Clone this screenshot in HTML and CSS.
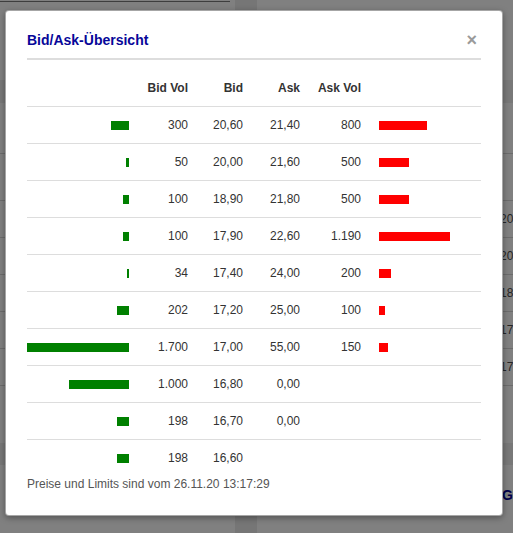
FILE: index.html
```html
<!DOCTYPE html>
<html lang="de">
<head>
<meta charset="utf-8">
<title>Bid/Ask-Übersicht</title>
<link rel="stylesheet" href="styles.css">
</head>
<body>
<div class="page">
  <div class="bg-top">
    <div class="ruler"><span class="tick"></span><span class="tick"></span><span class="tick"></span></div>
  </div>
  <div class="bg-gap1"></div>
  <div class="bg-dark1"></div>
  <div class="bg-gap2"></div>
  <div class="bg-row bg-row-first"></div>
  <div class="bg-row"><span class="bg-cell">20</span></div>
  <div class="bg-row"><span class="bg-cell">20</span></div>
  <div class="bg-row"><span class="bg-cell">18</span></div>
  <div class="bg-row"><span class="bg-cell">17</span></div>
  <div class="bg-row"><span class="bg-cell">17</span></div>
  <div class="bg-row bg-row-tall"></div>
  <div class="bg-dark2"></div>
  <div class="bg-foot"><span class="bg-link">G</span></div>
</div>

<div class="modal">
  <div class="m-head">
    <h4 class="m-title">Bid/Ask-Übersicht</h4>
    <span class="m-close">×</span>
  </div>
  <div class="m-rule"></div>
  <div class="book">
    <div class="b-row b-head">
      <div class="c-bar-l"></div>
      <div class="c-num">Bid Vol</div>
      <div class="c-num">Bid</div>
      <div class="c-num">Ask</div>
      <div class="c-num">Ask Vol</div>
      <div class="c-bar-r"></div>
    </div>
    <div class="b-row">
      <div class="c-bar-l"><span class="bar bar-bid" style="width:18px"></span></div>
      <div class="c-num">300</div><div class="c-num">20,60</div><div class="c-num">21,40</div><div class="c-num">800</div>
      <div class="c-bar-r"><span class="bar bar-ask" style="width:48px"></span></div>
    </div>
    <div class="b-row">
      <div class="c-bar-l"><span class="bar bar-bid" style="width:3px"></span></div>
      <div class="c-num">50</div><div class="c-num">20,00</div><div class="c-num">21,60</div><div class="c-num">500</div>
      <div class="c-bar-r"><span class="bar bar-ask" style="width:30px"></span></div>
    </div>
    <div class="b-row">
      <div class="c-bar-l"><span class="bar bar-bid" style="width:6px"></span></div>
      <div class="c-num">100</div><div class="c-num">18,90</div><div class="c-num">21,80</div><div class="c-num">500</div>
      <div class="c-bar-r"><span class="bar bar-ask" style="width:30px"></span></div>
    </div>
    <div class="b-row">
      <div class="c-bar-l"><span class="bar bar-bid" style="width:6px"></span></div>
      <div class="c-num">100</div><div class="c-num">17,90</div><div class="c-num">22,60</div><div class="c-num">1.190</div>
      <div class="c-bar-r"><span class="bar bar-ask" style="width:71px"></span></div>
    </div>
    <div class="b-row">
      <div class="c-bar-l"><span class="bar bar-bid" style="width:2px"></span></div>
      <div class="c-num">34</div><div class="c-num">17,40</div><div class="c-num">24,00</div><div class="c-num">200</div>
      <div class="c-bar-r"><span class="bar bar-ask" style="width:12px"></span></div>
    </div>
    <div class="b-row">
      <div class="c-bar-l"><span class="bar bar-bid" style="width:12px"></span></div>
      <div class="c-num">202</div><div class="c-num">17,20</div><div class="c-num">25,00</div><div class="c-num">100</div>
      <div class="c-bar-r"><span class="bar bar-ask" style="width:6px"></span></div>
    </div>
    <div class="b-row">
      <div class="c-bar-l"><span class="bar bar-bid" style="width:102px"></span></div>
      <div class="c-num">1.700</div><div class="c-num">17,00</div><div class="c-num">55,00</div><div class="c-num">150</div>
      <div class="c-bar-r"><span class="bar bar-ask" style="width:9px"></span></div>
    </div>
    <div class="b-row">
      <div class="c-bar-l"><span class="bar bar-bid" style="width:60px"></span></div>
      <div class="c-num">1.000</div><div class="c-num">16,80</div><div class="c-num">0,00</div><div class="c-num"></div>
      <div class="c-bar-r"></div>
    </div>
    <div class="b-row">
      <div class="c-bar-l"><span class="bar bar-bid" style="width:12px"></span></div>
      <div class="c-num">198</div><div class="c-num">16,70</div><div class="c-num">0,00</div><div class="c-num"></div>
      <div class="c-bar-r"></div>
    </div>
    <div class="b-row">
      <div class="c-bar-l"><span class="bar bar-bid" style="width:12px"></span></div>
      <div class="c-num">198</div><div class="c-num">16,60</div><div class="c-num"></div><div class="c-num"></div>
      <div class="c-bar-r"></div>
    </div>
  </div>
  <p class="m-foot">Preise und Limits sind vom 26.11.20 13:17:29</p>
</div>
</body>
</html>
```

FILE: styles.css
```css
html, body {
  margin: 0;
  padding: 0;
}
body {
  width: 513px;
  height: 533px;
  overflow: hidden;
  position: relative;
  font-family: "Liberation Sans", Arial, sans-serif;
  background: #808080 linear-gradient(to right, transparent 235px, #767676 235px, #767676 257px, transparent 257px);
}
.page {
  display: flex;
  flex-direction: column;
}
.bg-top {
  height: 10px;
  box-sizing: border-box;
  padding-top: 1px;
}
.ruler {
  width: 213px;
  height: 3px;
  border-top: 1px solid #3e3e3e;
  display: flex;
  padding-left: 17px;
}
.tick {
  width: 1px;
  height: 3px;
  background: #3e3e3e;
  margin-right: 77px;
}
.tick:nth-child(2) { margin-right: 75px; }
.bg-gap1 { height: 70px; }
.bg-dark1 { height: 23px; background: #787878; }
.bg-gap2 { height: 50px; }
.bg-row {
  height: 37px;
  box-sizing: border-box;
  border-top: 1px solid #6c6c6c;
  display: grid;
  grid-template-columns: 500px 1fr;
  align-items: center;
}
.bg-row-first { height: 47px; }
.bg-row-tall { height: 58px; }
.bg-cell {
  grid-column: 2;
  font-size: 12px;
  color: #262626;
  white-space: nowrap;
}
.bg-dark2 { height: 22px; background: #787878; }
.bg-foot {
  height: 60px;
  display: grid;
  grid-template-columns: 502px 1fr;
  align-items: center;
}
.bg-link {
  grid-column: 2;
  font-size: 14px;
  font-weight: bold;
  color: #00004a;
}

.modal {
  position: absolute;
  left: 5px;
  top: 10px;
  width: 498px;
  height: 506px;
  box-sizing: border-box;
  background: #fff;
  border: 1px solid rgba(0, 0, 0, 0.35);
  border-radius: 4px;
  box-shadow: 0 2px 6px rgba(0, 0, 0, 0.35);
  padding: 19px 21px 0;
}
.m-head {
  height: 20px;
  display: flex;
  align-items: center;
  justify-content: space-between;
}
.m-title {
  margin: 0;
  font-size: 14px;
  line-height: 20px;
  font-weight: bold;
  color: #070799;
}
.m-close {
  font-size: 18px;
  line-height: 20px;
  font-weight: bold;
  color: #9a9a9a;
  margin-right: 4px;
}
.m-rule {
  margin-top: 8px;
  height: 2px;
  background: #dddddd;
}
.book {
  margin-top: 10px;
  display: flex;
  flex-direction: column;
}
.b-row {
  display: grid;
  grid-template-columns: 110px 59px 55px 57px 61px 112px;
  height: 37px;
  box-sizing: border-box;
  border-top: 1px solid #dddddd;
  align-items: center;
  font-size: 12px;
  color: #333;
}
.b-head {
  height: 37px;
  border-top: 0;
  border-bottom: 1px solid #dddddd;
  font-weight: bold;
}
.b-head + .b-row {
  height: 36px;
  border-top: 0;
}
.c-num {
  text-align: right;
  padding-right: 8px;
  white-space: nowrap;
}
.c-bar-l {
  display: flex;
  justify-content: flex-end;
  padding-right: 8px;
}
.c-bar-r {
  display: flex;
  justify-content: flex-start;
  padding-left: 10px;
}
.bar {
  display: block;
  height: 9px;
}
.bar-bid { background: #008000; }
.bar-ask { background: #ff0000; }
.m-foot {
  margin: 0;
  font-size: 12px;
  line-height: 16px;
  color: #555;
}
```
